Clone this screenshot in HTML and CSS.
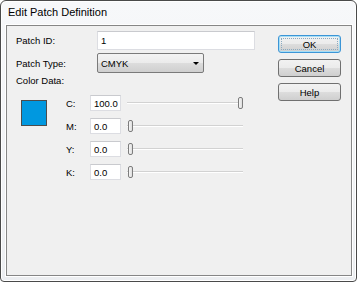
FILE: index.html
```html
<!DOCTYPE html>
<html lang="en">
<head>
    <meta charset="UTF-8">
    <meta name="viewport" content="width=device-width, initial-scale=1.0">
    <title>Edit Patch Definition</title>
    <link rel="stylesheet" href="styles.css">
</head>
<body>
    <div class="window">
        <div class="titlebar">Edit Patch Definition</div>
        <div class="client">
            <div class="form">
                <div class="field">
                    <label class="label">Patch ID:</label>
                    <div class="textbox wide">1</div>
                </div>
                <div class="field type-field">
                    <label class="label">Patch Type:</label>
                    <div class="combo">
                        <span>CMYK</span>
                        <span class="arrow"></span>
                    </div>
                </div>
                <div class="label section">Color Data:</div>
                <div class="color-data">
                    <div class="swatch"></div>
                    <div class="channels">
                        <div class="channel">
                            <span class="ch-label">C:</span>
                            <div class="textbox small">100.0</div>
                            <div class="slider"><div class="track"></div><div class="thumb" style="--v: 1"></div></div>
                        </div>
                        <div class="channel">
                            <span class="ch-label">M:</span>
                            <div class="textbox small">0.0</div>
                            <div class="slider"><div class="track"></div><div class="thumb" style="--v: 0"></div></div>
                        </div>
                        <div class="channel">
                            <span class="ch-label">Y:</span>
                            <div class="textbox small">0.0</div>
                            <div class="slider"><div class="track"></div><div class="thumb" style="--v: 0"></div></div>
                        </div>
                        <div class="channel">
                            <span class="ch-label">K:</span>
                            <div class="textbox small">0.0</div>
                            <div class="slider"><div class="track"></div><div class="thumb" style="--v: 0"></div></div>
                        </div>
                    </div>
                </div>
            </div>
            <div class="buttons">
                <button class="btn default"><span>OK</span></button>
                <button class="btn">Cancel</button>
                <button class="btn">Help</button>
            </div>
        </div>
    </div>
</body>
</html>
```

FILE: styles.css
```css
body {
    margin: 0;
    background: #ffffff;
    font-family: "Liberation Sans", Arial, sans-serif;
}
.window {
    width: 357px;
    height: 282px;
    box-sizing: border-box;
    border: 1px solid #4a4a4a;
    border-radius: 6px 6px 4px 4px;
    background: linear-gradient(#f7f8fa, #eceef1);
    box-shadow: inset 0 0 0 1px #ffffff;
    padding: 0 4px 5px 5px;
}
.titlebar {
    height: 24px;
    line-height: 22px;
    padding-left: 2px;
    font-size: 11px;
    color: #000;
}
.client {
    display: flex;
    height: 251px;
    box-sizing: border-box;
    border: 1px solid #868686;
    background: #f0f0f0;
    box-shadow: 0 0 0 1px #ffffff;
    font-size: 9.5px;
    color: #000;
}
.form {
    flex: 1;
    padding: 5px 0 0 9px;
}
.field {
    display: flex;
    align-items: center;
}
.type-field {
    margin-top: 3px;
}
.label {
    width: 81px;
}
.section {
    margin-top: 2px;
    line-height: 12px;
}
.textbox {
    box-sizing: border-box;
    background: #ffffff;
    border: 1px solid #dcdde2;
    border-top-color: #c9cace;
    padding-left: 3px;
    display: flex;
    align-items: center;
}
.wide {
    width: 158px;
    height: 19px;
}
.small {
    width: 31px;
    height: 16px;
}
.combo {
    width: 107px;
    height: 20px;
    box-sizing: border-box;
    border: 1px solid #7a7a7a;
    border-radius: 2px;
    background: linear-gradient(#f3f3f3 0%, #ebebeb 50%, #dddddd 50%, #cfcfcf 100%);
    display: flex;
    align-items: center;
    justify-content: space-between;
    padding: 0 4px 0 3px;
}
.arrow {
    width: 0;
    height: 0;
    border-left: 3px solid transparent;
    border-right: 3px solid transparent;
    border-top: 3px solid #000;
}
.color-data {
    display: flex;
    margin-top: 8px;
}
.swatch {
    width: 26px;
    height: 26px;
    box-sizing: border-box;
    margin: 5px 0 0 5px;
    background: #0098e0;
    border: 1px solid #4c4c4c;
}
.channels {
    margin-left: 19px;
    display: flex;
    flex-direction: column;
    gap: 7px;
}
.channel {
    display: flex;
    align-items: center;
    height: 16px;
}
.ch-label {
    width: 24px;
}
.slider {
    position: relative;
    width: 116px;
    height: 16px;
    margin-left: 6px;
    display: flex;
    align-items: center;
}
.track {
    width: 100%;
    height: 1px;
    background: #d2d2d2;
    border-bottom: 1px solid #ffffff;
}
.thumb {
    position: absolute;
    top: 2px;
    left: calc(1px + (100% - 6px) * var(--v));
    width: 5px;
    height: 12px;
    box-sizing: border-box;
    border: 1px solid #7d7d7d;
    border-radius: 2px;
    background: linear-gradient(to right, #f6f6f6, #dedede);
}
.buttons {
    width: 63px;
    padding: 9px 10px 0 0;
    display: flex;
    flex-direction: column;
    gap: 6px;
}
.btn {
    width: 63px;
    height: 18px;
    box-sizing: border-box;
    padding: 0;
    border: 1px solid #707070;
    border-radius: 3px;
    background: linear-gradient(#f2f2f2 0%, #ebebeb 50%, #dddddd 50%, #cfcfcf 100%);
    font-family: "Liberation Sans", Arial, sans-serif;
    font-size: 9.5px;
    color: #000;
}
.default {
    border-color: #3c95d6;
    box-shadow: inset 0 0 0 1px #a6def6;
    display: flex;
    align-items: center;
    justify-content: center;
}
.default span {
    display: block;
    width: 57px;
    height: 12px;
    line-height: 12px;
    box-sizing: border-box;
    border: 1px dotted #8aaac0;
}
```
